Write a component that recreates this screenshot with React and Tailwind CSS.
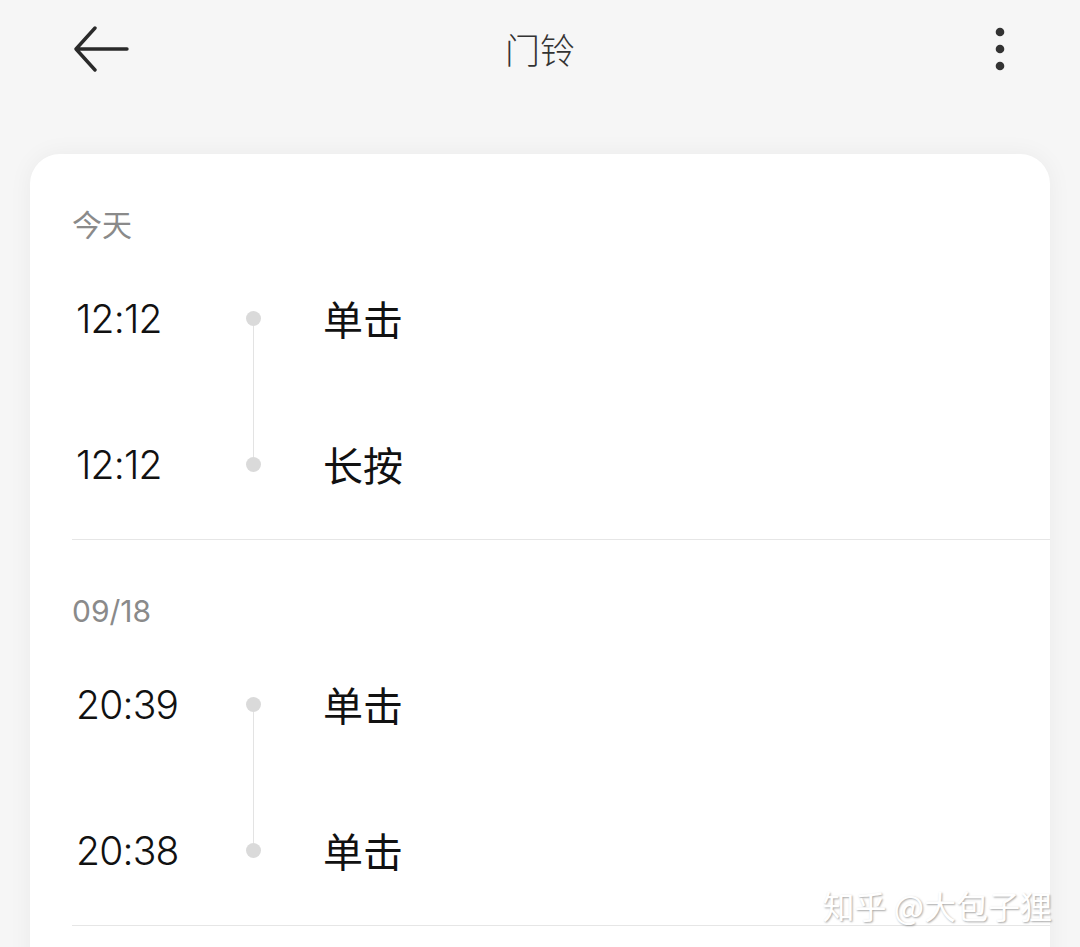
import React from "react";

const sections = [
  {
    label: "今天",
    items: [
      { time: "12:12", action: "单击" },
      { time: "12:12", action: "长按" },
    ],
  },
  {
    label: "09/18",
    items: [
      { time: "20:39", action: "单击" },
      { time: "20:38", action: "单击" },
    ],
  },
];

const cjk = "font-['Inter','Noto_Sans_CJK_SC',sans-serif]";

function BackArrow() {
  return (
    <svg width="56" height="46" viewBox="0 0 56 46" fill="none">
      <path
        d="M54 23H4M22 2L3 23L22 44"
        stroke="#2a2a2a"
        strokeWidth="3.4"
        strokeLinecap="round"
        strokeLinejoin="round"
      />
    </svg>
  );
}

function Row({ time, action, first, last }) {
  return (
    <div className="flex h-[146px] items-stretch">
      <div className="flex w-[174px] items-center pl-[4px] text-[39px] font-[350] tracking-[-0.8px] text-[#111] leading-none font-['Inter','Noto_Sans_CJK_SC',sans-serif]">
        {time}
      </div>
      <div className="flex w-[15px] flex-col items-center">
        <div className={"w-px flex-1 " + (first ? "" : "bg-[#e3e3e3]")} />
        <div className="h-[15px] w-[15px] rounded-full bg-[#dadada]" />
        <div className={"w-px flex-1 " + (last ? "" : "bg-[#e3e3e3]")} />
      </div>
      <div className="ml-[62px] flex items-center text-[40px] text-[#111] leading-none font-['Noto_Sans_CJK_SC',sans-serif]">
        {action}
      </div>
    </div>
  );
}

export default function App() {
  return (
    <div className={"relative h-[947px] w-[1080px] overflow-hidden bg-[#f6f6f6] " + cjk}>
      {/* header */}
      <div className="flex h-[98px] items-center pl-[73px] pr-[73px]">
        <div className="flex flex-1 items-center">
          <BackArrow />
        </div>
        <div className="text-[35px] font-light text-[#333] font-['Noto_Sans_CJK_SC',sans-serif]">门铃</div>
        <div className="flex flex-1 items-center justify-end">
          <svg width="14" height="46" viewBox="0 0 14 46">
            <circle cx="7" cy="6" r="4.3" fill="#333" />
            <circle cx="7" cy="23" r="4.3" fill="#333" />
            <circle cx="7" cy="40" r="4.3" fill="#333" />
          </svg>
        </div>
      </div>

      {/* card */}
      <div className="ml-[30px] mt-[56px] h-[900px] w-[1020px] rounded-[30px] bg-white pl-[42px] shadow-[0_0_24px_rgba(0,0,0,0.05)]">
        {sections.map((s) => (
          <div key={s.label} className="border-b border-[#e6e6e6] pb-[2px] pt-[51px]">
            <div className="flex h-[40px] items-center text-[30px] leading-none text-[#8a8a8a]">
              {s.label}
            </div>
            {s.items.map((it, i) => (
              <Row
                key={i}
                time={it.time}
                action={it.action}
                first={i === 0}
                last={i === s.items.length - 1}
              />
            ))}
          </div>
        ))}
      </div>

      {/* watermark */}
      <div className="absolute bottom-[26px] right-[28px] text-[32px] leading-none text-white [text-shadow:1px_1px_2px_rgba(0,0,0,0.35)] font-['Noto_Sans_CJK_SC',sans-serif]">
        知乎 @大包子狸
      </div>
    </div>
  );
}
